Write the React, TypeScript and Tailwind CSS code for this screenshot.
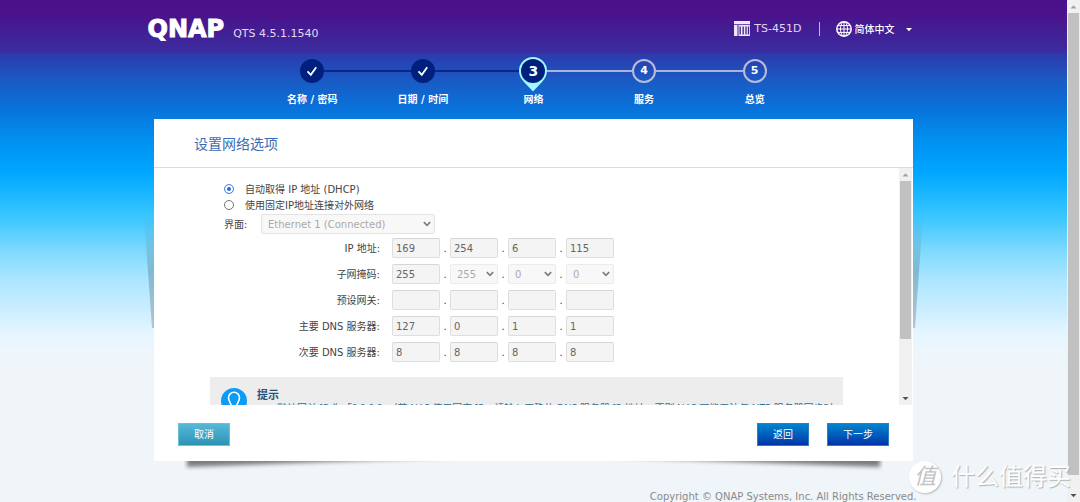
import { useState } from 'react';
import type { ReactNode } from 'react';

type Step = { label: string; state: 'done' | 'current' | 'next' };

const steps: Step[] = [
  { label: '名称 / 密码', state: 'done' },
  { label: '日期 / 时间', state: 'done' },
  { label: '网络', state: 'current' },
  { label: '服务', state: 'next' },
  { label: '总览', state: 'next' },
];

const rows = [
  { id: 'ip', label: 'IP 地址:', values: ['169', '254', '6', '115'] },
  { id: 'mask', label: '子网掩码:', values: ['255', '255', '0', '0'], selects: true },
  { id: 'gateway', label: '预设网关:', values: ['', '', '', ''] },
  { id: 'dns1', label: '主要 DNS 服务器:', values: ['127', '0', '1', '1'] },
  { id: 'dns2', label: '次要 DNS 服务器:', values: ['8', '8', '8', '8'] },
];

function Chevron() {
  return (
    <svg className="pointer-events-none absolute right-1 top-1/2 h-2 w-2 -translate-y-1/2" viewBox="0 0 8 8" fill="none">
      <path d="M0.8 2.2L4 5.3L7.2 2.2" stroke="#7d7d7d" strokeWidth="1.7" />
    </svg>
  );
}

function ScrollBar({ inner = false }: { inner?: boolean }) {
  return (
    <div className="flex w-[13px] shrink-0 flex-col items-center bg-[#f1f1f1]" aria-hidden="true">
      <svg className="h-[13px] w-[13px] shrink-0" viewBox="0 0 13 13">
        <path d="M3.5 8.5L6.5 5.2L9.5 8.5Z" fill="#a3a3a3" />
      </svg>
      <div className="w-full flex-1 px-px">
        <div className={inner ? 'h-3/4 bg-[#c1c1c1]' : 'h-[97%] bg-[#c1c1c1]'} />
      </div>
      <svg className="h-[13px] w-[13px] shrink-0" viewBox="0 0 13 13">
        <path d="M3.5 5L6.5 8.2L9.5 5Z" fill="#505050" />
      </svg>
    </div>
  );
}

function StepMarker({ step, index }: { step: Step; index: number }) {
  if (step.state === 'done') {
    return (
      <span className="flex h-6 w-6 items-center justify-center rounded-full bg-[#00207e]">
        <svg className="h-3 w-3" viewBox="0 0 12 12" fill="none">
          <path d="M1.5 6.4L4.8 9.8L10.2 2.2" stroke="#fff" strokeWidth="1.8" />
        </svg>
      </span>
    );
  }
  if (step.state === 'current') {
    return (
      <span className="relative flex h-6 w-7 items-center justify-center">
        <svg className="absolute -top-0.5 left-0 h-[35px] w-7" viewBox="0 0 28 35">
          <path d="M14 0a14 14 0 0 1 14 14c0 4-2 8-5 11L14 34.5L5 25C2 22 0 18 0 14A14 14 0 0 1 14 0Z" fill="#9ff8ff" />
          <circle cx="14" cy="14" r="12" fill="#00207e" />
        </svg>
        <span className="relative text-sm font-bold">{index}</span>
      </span>
    );
  }
  return (
    <span className="flex h-6 w-6 items-center justify-center rounded-full border-2 border-[#b9bddb] text-[11px] font-bold">
      {index}
    </span>
  );
}

function Octet({ id, value, label }: { id: string; value: string; label: string }) {
  return (
    <input
      id={id}
      aria-label={label}
      defaultValue={value}
      disabled
      className="h-5 w-12 rounded-xs border border-[#dedede] border-t-[#d6d6d6] bg-[#f4f4f4] px-[3px] text-[10px] text-[#666]"
    />
  );
}

function OctetSelect({ id, value, label }: { id: string; value: string; label: string }) {
  return (
    <span className="relative block h-5 w-12">
      <select
        id={id}
        aria-label={label}
        defaultValue={value}
        disabled
        className="h-5 w-12 appearance-none rounded-xs border border-[#ececec] bg-[#f8f8f8] pl-1.5 text-[10px] text-[#aaa] opacity-100"
      >
        <option>{value}</option>
      </select>
      <Chevron />
    </span>
  );
}

function Radio({ checked, onChange, children }: { checked: boolean; onChange: () => void; children: ReactNode }) {
  return (
    <label className="flex h-4 items-center gap-[11px]">
      <input
        type="radio"
        name="mode"
        checked={checked}
        onChange={onChange}
        className="h-[10px] w-[10px] appearance-none rounded-full border border-[#767676] bg-white checked:border-[#5b8be0] checked:bg-[#2468dd] checked:shadow-[inset_0_0_0_2px_white]"
      />
      {children}
    </label>
  );
}

export default function App() {
  const [mode, setMode] = useState('dhcp');

  return (
    <div className="relative flex h-screen min-h-[480px] overflow-hidden font-['DejaVu_Sans','Noto_Sans_CJK_SC',sans-serif] text-[10px] text-[#444]">
      <div className="flex min-w-0 flex-1 flex-col bg-[linear-gradient(#4a118b_0px,#4a128b_14px,#3a2d9f_52px,#2c3bad_55px,#1a5ac4_80px,#0a70d8_106px,#0090f0_140px,#00a6ff_172px,#16b4ff_190px,#40c8ff_220px,#7dd9ff_250px,#ace6ff_280px,#cdeeff_312px,#e4f5ff_332px,#edf6fb_352px,#eff5f9_370px)]">
        {/* Top bar */}
        <header className="mx-auto flex w-full max-w-[772px] items-center justify-between pt-[15px] pr-2 text-white">
          <div className="flex items-baseline gap-[9px]">
            <h1 className="text-2xl leading-7 font-bold [-webkit-text-stroke:1px_white]">QNAP</h1>
            <span className="text-[11px] text-[#e3d8f0]">QTS 4.5.1.1540</span>
          </div>
          <div className="flex items-center text-[#e3d8f0]">
            <svg className="mr-1 h-4 w-4" viewBox="0 0 16 16">
              <path d="M0 0H16V3.2H0ZM0 4H3.5V15H0ZM4.5 4H16V15H4.5Z" fill="#fff" opacity=".9" />
              <path d="M6.2 5.5V13.5M9.2 5.5V13.5M12 5.5V13.5M14.5 5.5V13.5" stroke="#43208f" strokeWidth="1.3" />
            </svg>
            <span className="text-[11px]">TS-451D</span>
            <span className="ml-[17px] h-3.5 w-px bg-[#c5b5e0]" />
            <svg className="ml-4 h-4 w-4" viewBox="0 0 16 16" fill="none" stroke="#fff">
              <circle cx="8" cy="8" r="7.2" strokeWidth="1.5" />
              <ellipse cx="8" cy="8" rx="3.5" ry="7.2" />
              <path d="M8 1V15M1 8H15M2 4.6H14M2 11.4H14" />
            </svg>
            <button className="flex items-center pl-[3px] text-[10px] font-medium text-white">
              简体中文
              <svg className="ml-[11px] h-2 w-1.5" viewBox="0 0 6 8">
                <path d="M0 3H6L3 6.2Z" fill="#fff" />
              </svg>
            </button>
          </div>
        </header>

        {/* Wizard steps */}
        <ol className="mx-auto mt-4 flex w-full max-w-[553px] text-white">
          {steps.map((step, i) => (
            <li key={step.label} className="flex-1 text-center">
              <div className="flex items-center justify-center">
                <span className={i === 0 ? 'h-0.5 flex-1' : i < 3 ? 'h-0.5 flex-1 bg-[#07278a]' : 'h-0.5 flex-1 bg-[#a9b3dc]'} />
                <StepMarker step={step} index={i + 1} />
                <span className={i === 4 ? 'h-0.5 flex-1' : i < 2 ? 'h-0.5 flex-1 bg-[#07278a]' : 'h-0.5 flex-1 bg-[#a9b3dc]'} />
              </div>
              <div className="mt-[9px] h-4 leading-4 font-bold">{step.label}</div>
            </li>
          ))}
        </ol>

        {/* Card */}
        <div className="relative isolate mx-auto mt-[11px] flex min-h-0 w-full max-w-[759px] flex-1 flex-col">
          <div className="absolute top-24 -left-[10px] -z-10 h-[113px] w-[10px] bg-linear-to-b from-transparent via-[#5f91a4]/50 to-[#8797a0]/50 [clip-path:polygon(0_0,100%_0,100%_100%,80%_100%)]" />
          <div className="absolute top-24 -right-[10px] -z-10 h-[113px] w-[10px] bg-linear-to-b from-transparent via-[#5f91a4]/50 to-[#8797a0]/50 [clip-path:polygon(0_0,100%_0,20%_100%,0_100%)]" />
          <svg className="absolute -bottom-3 left-[30px] -z-10 h-5 w-[300px]" viewBox="0 0 300 20">
            <path d="M3 0H300V3L3 14Z" fill="#777c7c" className="blur-[2px]" />
          </svg>
          <svg className="absolute right-[30px] -bottom-3 -z-10 h-5 w-[300px]" viewBox="0 0 300 20">
            <path d="M297 0H0V3L297 14Z" fill="#777c7c" className="blur-[2px]" />
          </svg>

          <h2 className="border-b border-[#dcdcdc] bg-white px-10 pt-[13px] pb-[11px] text-sm leading-6 text-[#3a6db5]">设置网络选项</h2>
          <div className="flex min-h-0 flex-1 bg-white pr-px">
            <div className="min-w-0 flex-1 overflow-hidden px-14 pt-[13px]">
              <form className="pl-[14px]">
                <Radio checked={mode === 'dhcp'} onChange={() => setMode('dhcp')}>自动取得 IP 地址 (DHCP)</Radio>
                <Radio checked={mode === 'static'} onChange={() => setMode('static')}>使用固定IP地址连接对外网络</Radio>
                <div className="mt-px flex items-center">
                  <label htmlFor="iface" className="w-[37px]">界面:</label>
                  <span className="relative block">
                    <select
                      id="iface"
                      disabled
                      className="block h-5 w-[174px] appearance-none rounded-xs border border-[#e4e4e4] bg-[#f8f8f8] pl-1.5 text-[10px] text-[#aaa] opacity-100"
                    >
                      <option>Ethernet 1 (Connected)</option>
                    </select>
                    <Chevron />
                  </span>
                </div>
                <div className="mt-1 space-y-1.5">
                  {rows.map((row) => (
                    <div key={row.id} className="flex h-5 items-center">
                      <label htmlFor={`${row.id}-0`} className="mr-3 w-[156px] text-right">{row.label}</label>
                      {row.values.map((value, i) => (
                        <div key={i} className="flex items-center">
                          {i > 0 && <span className="w-[10px] text-center">.</span>}
                          {row.selects && i > 0 ? (
                            <OctetSelect id={`${row.id}-${i}`} value={value} label={`${row.label} ${i + 1}`} />
                          ) : (
                            <Octet id={`${row.id}-${i}`} value={value} label={`${row.label} ${i + 1}`} />
                          )}
                        </div>
                      ))}
                    </div>
                  ))}
                </div>
              </form>
              <div className="mt-[15px] flex gap-[10px] bg-[#ededed] px-[11px] pt-[11px] pb-4 text-[#2f6f95]">
                <svg className="h-[26px] w-[26px] shrink-0" viewBox="0 0 26 26" fill="none">
                  <circle cx="13" cy="13" r="13" fill="#0b9cf8" />
                  <path d="M10.5 19C10.5 15.5 7.5 13.5 7.5 9.8a5.5 5.5 0 0 1 11 0c0 3.7-3 5.7-3 9.2" stroke="#fff" strokeWidth="1.6" />
                  <path d="M10.5 21.5h5" stroke="#fff" strokeWidth="1.5" />
                </svg>
                <div>
                  <h3 className="text-[11px] leading-4 font-bold text-[#265377]">提示</h3>
                  <ul className="list-disc pl-5 font-['Noto_Sans','Noto_Sans_CJK_SC',sans-serif] leading-2 whitespace-nowrap">
                    <li>默认网关 IP 为「0.0.0.0」（若 NAS 使用固定 IP，请输入正确的 DNS 服务器 IP 地址，否则 NAS 可能无法与 NTP 服务器同步时</li>
                  </ul>
                </div>
              </div>
            </div>
            <ScrollBar inner />
          </div>
          <div className="flex items-center bg-white px-6 pt-[18px] pb-[15px] text-white">
            <button className="h-[23px] w-[52px] border border-[#6dc0d8] bg-linear-to-b from-[#55b8d8] to-[#2d93b3]">取消</button>
            <button className="ml-auto h-[23px] w-[52px] border border-[#2b7fc4] bg-linear-to-b from-[#0084cf] to-[#0033a8]">返回</button>
            <button className="ml-[18px] h-[23px] w-[62px] border border-[#2b7fc4] bg-linear-to-b from-[#0084cf] to-[#0033a8]">下一步</button>
          </div>
        </div>

        <footer className="mx-auto mt-4 h-[25px] w-full max-w-[790px] border-t border-[#f5f7f7] pt-[11px] pr-3 text-right text-[#8a8a8a]">
          Copyright © QNAP Systems, Inc. All Rights Reserved.
        </footer>
      </div>
      <ScrollBar />

      {/* Watermark */}
      <div className="absolute right-[9px] bottom-[9px] flex items-center gap-[10px] text-2xl leading-8 text-white [text-shadow:1px_1px_1px_#aab0b3]">
        <span className="flex h-8 w-8 items-center justify-center rounded-full bg-white text-[22px] text-[#bfc4c7] italic shadow-[1px_1px_2px_#b5babd] [text-shadow:none]">值</span>
        <span>什么值得买</span>
      </div>
    </div>
  );
}
